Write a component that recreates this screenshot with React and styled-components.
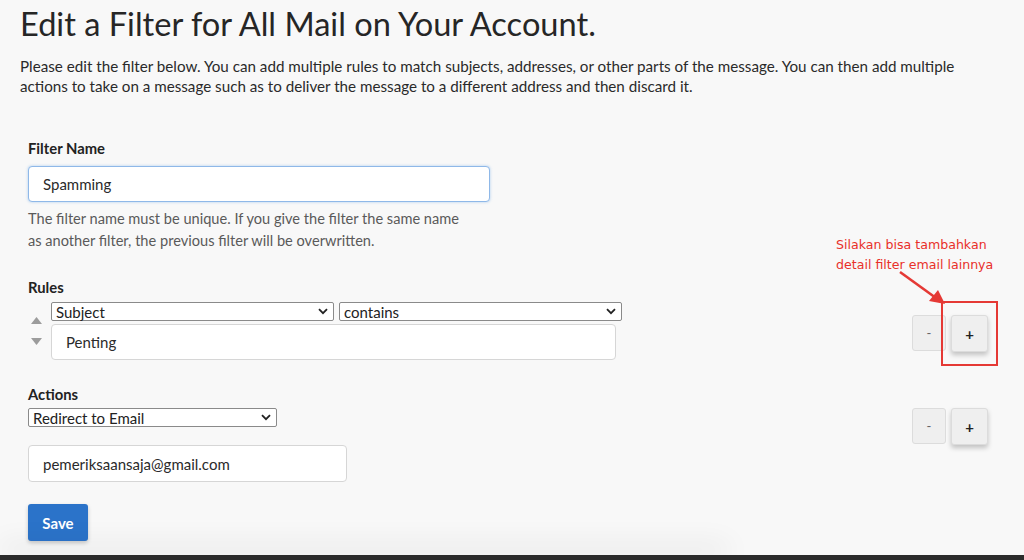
import React from 'react';
import styled, { createGlobalStyle } from 'styled-components';

const GlobalStyle = createGlobalStyle`
  html, body { margin: 0; padding: 0; background: #2b2b2b; }
  body { font-family: Lato, "Noto Sans", sans-serif; color: #2a2a2a; }
  * { box-sizing: border-box; }
`;

const Page = styled.div`
  position: relative;
  width: 1024px;
  height: 555px;
  background: #f8f8f8;
  padding: 0 20px;
  overflow: hidden;
`;

const Title = styled.h1`
  margin: 4px 0 0;
  font-size: 32.6px;
  line-height: 40px;
  font-weight: 400;
  color: #262626;
`;

const Intro = styled.p`
  margin: 12px 0 0;
  font-size: 15.2px;
  line-height: 20px;
  color: #2a2a2a;
`;

const Form = styled.div`
  margin: 42px 0 0 8px;
  width: 960px;
`;

const Label = styled.div`
  font-weight: 700;
  font-size: 14.8px;
  line-height: 20px;
  color: #222;
  margin-top: ${p => p.$top || 0}px;
`;

const TextBox = styled.div`
  width: ${p => p.$width}px;
  height: ${p => p.$height || 36}px;
  margin-top: ${p => p.$top || 0}px;
  background: #fff;
  border: 1px solid ${p => (p.$focus ? '#8fb8e8' : '#d6d6d6')};
  box-shadow: ${p => (p.$focus ? '0 0 3px rgba(80,150,230,0.45)' : 'none')};
  border-radius: 4px;
  padding: 0 14px;
  display: flex;
  align-items: center;
  font-size: 15px;
  color: #2a2a2a;
`;

const Help = styled.p`
  margin: 6px 0 0;
  width: 440px;
  font-size: 14.6px;
  line-height: 22px;
  color: #5a5a5a;
`;

const Row = styled.div`
  display: grid;
  grid-template-columns: 1fr auto;
  align-items: start;
  margin-top: ${p => p.$top || 0}px;
`;

const RuleBody = styled.div`
  display: grid;
  grid-template-columns: 23px auto;
`;

const Sorter = styled.div`
  display: flex;
  flex-direction: column;
  gap: 14px;
  padding: 15px 0 0 3px;
`;

const Triangle = ({ down }) => (
  <svg width="11" height="7" viewBox="0 0 11 7">
    <polygon points={down ? '0,0 11,0 5.5,7' : '0,7 11,7 5.5,0'} fill="#9c9c9c" />
  </svg>
);

const Stack = styled.div`
  display: flex;
  flex-direction: column;
  gap: 3px;
`;

const Selects = styled.div`
  display: flex;
  gap: 5px;
`;

const Select = styled.div`
  width: ${p => p.$width}px;
  height: 19px;
  background: #fff;
  border: 1px solid #8a8a8a;
  border-radius: 2px;
  display: flex;
  align-items: center;
  justify-content: space-between;
  padding: 0 5px 0 4px;
  font-size: 15px;
  color: #222;
`;

const Chevron = () => (
  <svg width="10" height="7" viewBox="0 0 10 7">
    <path d="M1 1.2 L5 5.2 L9 1.2" fill="none" stroke="#222" strokeWidth="1.8" />
  </svg>
);

const Pair = styled.div`
  display: flex;
  align-items: flex-start;
  gap: 5px;
  margin-top: ${p => p.$top || 0}px;
`;

const StepButton = styled.button`
  width: ${p => (p.$raised ? 37 : 34)}px;
  height: ${p => (p.$raised ? 37 : 36)}px;
  background: #efefef;
  border: 1px solid #dcdcdc;
  border-radius: 3px;
  box-shadow: ${p => (p.$raised ? '0 3px 5px rgba(0,0,0,0.22)' : 'none')};
  font-family: Lato, sans-serif;
  font-size: ${p => (p.$raised ? 15 : 13)}px;
  font-weight: ${p => (p.$raised ? 700 : 400)};
  color: ${p => (p.$raised ? '#222' : '#666')};
  padding: 0;
`;

const SaveButton = styled.button`
  margin-top: 22px;
  width: 60px;
  height: 37px;
  background: #2b73c9;
  border: none;
  border-radius: 3px;
  box-shadow: 0 2px 4px rgba(0,0,0,0.2);
  color: #fff;
  font-family: Lato, sans-serif;
  font-weight: 700;
  font-size: 15px;
`;

const Note = styled.div`
  position: absolute;
  left: 836px;
  top: 235px;
  font-family: "DejaVu Sans", sans-serif;
  font-size: 12.6px;
  line-height: 20px;
  color: #e8302a;
`;

const Highlight = styled.div`
  position: absolute;
  left: 941px;
  top: 301px;
  width: 57px;
  height: 65px;
  border: 2px solid #e53935;
`;

const Arrow = styled.svg`
  position: absolute;
  left: 897px;
  top: 269px;
`;

const BottomShade = styled.div`
  position: absolute;
  left: 0;
  bottom: -6px;
  width: 730px;
  height: 6px;
  box-shadow: 0 -8px 28px rgba(0,0,0,0.16);
  border-radius: 0 30px 0 0;
`;

export default function App() {
  return (
    <>
      <GlobalStyle />
      <Page>
        <Title>Edit a Filter for All Mail on Your Account.</Title>
        <Intro>
          Please edit the filter below. You can add multiple rules to match subjects, addresses, or other parts of the message. You can then add multiple
          <br />
          actions to take on a message such as to deliver the message to a different address and then discard it.
        </Intro>
        <Form>
          <Label>Filter Name</Label>
          <TextBox $width={462} $top={8} $focus>Spamming</TextBox>
          <Help>
            The filter name must be unique. If you give the filter the same name as another filter, the previous filter will be overwritten.
          </Help>

          <Label $top={25}>Rules</Label>
          <Row $top={5}>
            <RuleBody>
              <Sorter>
                <Triangle />
                <Triangle down />
              </Sorter>
              <Stack>
                <Selects>
                  <Select $width={283}>Subject<Chevron /></Select>
                  <Select $width={283}>contains<Chevron /></Select>
                </Selects>
                <TextBox $width={565}>Penting</TextBox>
              </Stack>
            </RuleBody>
            <Pair $top={13}>
              <StepButton>-</StepButton>
              <StepButton $raised>+</StepButton>
            </Pair>
          </Row>

          <Label $top={24}>Actions</Label>
          <Row $top={4}>
            <div>
              <Select $width={249}>Redirect to Email<Chevron /></Select>
              <TextBox $width={319} $height={37} $top={18}>pemeriksaansaja@gmail.com</TextBox>
            </div>
            <Pair>
              <StepButton>-</StepButton>
              <StepButton $raised>+</StepButton>
            </Pair>
          </Row>

          <SaveButton>Save</SaveButton>
        </Form>

        <Note>
          Silakan bisa tambahkan
          <br />
          detail filter email lainnya
        </Note>
        <Arrow width="52" height="40" viewBox="0 0 52 40">
          <line x1="3" y1="3" x2="39" y2="29" stroke="#e53935" strokeWidth="2.6" />
          <polygon points="48,35 32,32 41,21" fill="#e53935" />
        </Arrow>
        <Highlight />
        <BottomShade />
      </Page>
    </>
  );
}
